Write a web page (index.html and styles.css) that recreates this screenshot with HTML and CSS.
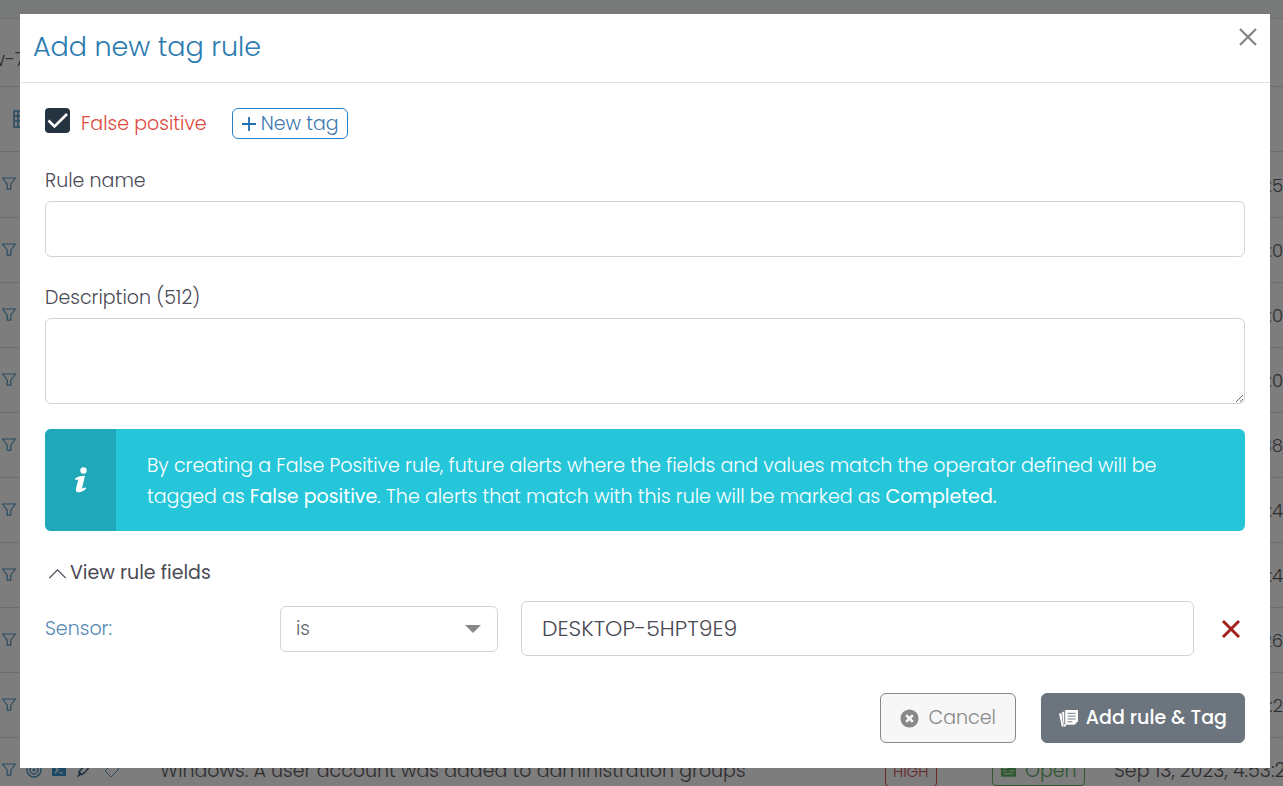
FILE: index.html
```html
<!DOCTYPE html>
<html lang="en">
<head>
<meta charset="utf-8">
<title>Add new tag rule</title>
<meta name="viewport" content="width=device-width, initial-scale=1">
<link rel="stylesheet" href="styles.css">
</head>
<body>
<svg class="sprite" aria-hidden="true">
  <symbol id="funnel" viewBox="0 0 16 16"><path d="M1.500 2h13L9.800 8v5.200H6.200V8z" fill="none" stroke="currentColor" stroke-width="1.200" stroke-linejoin="round"/></symbol>
</svg>

<div class="page" aria-hidden="true">
  <div class="topband"></div>
  <div class="pagebar"><span class="clip">w-7</span></div>
  <div class="toolbar">
    <svg class="list" viewBox="0 0 18 18"><path d="M1 1h16v16H1zM1 6h16M1 11h16M5 1v16" fill="none" stroke="currentColor" stroke-width="1.600"/></svg>
  </div>
  <table class="alerts">
    <colgroup><col class="c-tools"><col><col class="c-severity"><col class="c-status"><col class="c-time"></colgroup>
    <tbody>
      <tr><td><svg class="ico"><use href="#funnel"/></svg></td><td></td><td></td><td></td><td class="tail">:5</td></tr>
      <tr><td><svg class="ico"><use href="#funnel"/></svg></td><td></td><td></td><td></td><td class="tail">:0</td></tr>
      <tr><td><svg class="ico"><use href="#funnel"/></svg></td><td></td><td></td><td></td><td class="tail">:0</td></tr>
      <tr><td><svg class="ico"><use href="#funnel"/></svg></td><td></td><td></td><td></td><td class="tail">:0</td></tr>
      <tr><td><svg class="ico"><use href="#funnel"/></svg></td><td></td><td></td><td></td><td class="tail">38</td></tr>
      <tr><td><svg class="ico"><use href="#funnel"/></svg></td><td></td><td></td><td></td><td class="tail">0:4</td></tr>
      <tr><td><svg class="ico"><use href="#funnel"/></svg></td><td></td><td></td><td></td><td class="tail">:4</td></tr>
      <tr><td><svg class="ico"><use href="#funnel"/></svg></td><td></td><td></td><td></td><td class="tail">26</td></tr>
      <tr><td><svg class="ico"><use href="#funnel"/></svg></td><td></td><td></td><td></td><td class="tail">:2</td></tr>
      <tr>
        <td><div class="tools">
          <svg class="ico"><use href="#funnel"/></svg>
          <svg class="ico" viewBox="0 0 16 16"><g fill="none" stroke="currentColor" stroke-width="1.500"><circle cx="8" cy="8" r="7"/><circle cx="8" cy="8" r="4"/></g><circle cx="8" cy="8" r="1.600" fill="currentColor"/></svg>
          <svg class="ico ico-console" viewBox="0 0 16 16"><rect x="1" y="1" width="14" height="13" fill="currentColor"/><path d="M4 5l3 3-3 3M8 11h4" fill="none" stroke="#fff" stroke-width="1.200"/></svg>
          <svg class="ico ico-dark" viewBox="0 0 16 16"><path d="M15 1C10 3 5 7 3 10l3 2.500C10 10 13 6 15 1z" fill="none" stroke="currentColor" stroke-width="1.500"/><path d="M3 10l-2 5.500 5-3z" fill="currentColor"/></svg>
          <svg class="ico ico-tag" viewBox="0 0 16 16"><path d="M1 9l7-7h6v6l-7 7z" fill="none" stroke="currentColor" stroke-linejoin="round"/><circle cx="11.500" cy="4.500" r="1" fill="currentColor"/></svg>
        </div></td>
        <td>Windows: A user account was added to administration groups</td>
        <td><span class="badge badge-high">HIGH</span></td>
        <td><span class="badge badge-open"><svg class="ticket" viewBox="0 0 18 14"><path d="M1 1h16v12H1z" fill="currentColor"/><path d="M3 4h5M3 7h4M10 7h5M4 10h10" stroke="#fff"/></svg>Open</span></td>
        <td>Sep 13, 2023, 4:53:2</td>
      </tr>
    </tbody>
  </table>
</div>

<div class="backdrop">
  <form class="dialog" role="dialog" aria-modal="true" aria-labelledby="dialog-title">
    <header class="dialog-head">
      <h1 id="dialog-title">Add new tag rule</h1>
      <button class="icon-btn close" type="button" aria-label="Close"><svg viewBox="0 0 20 20"><path d="M2 2l16 16M18 2L2 18" fill="none" stroke="currentColor" stroke-width="2.200"/></svg></button>
    </header>
    <div class="dialog-body">
      <div class="tags">
        <span class="check">
          <input type="checkbox" id="false-positive" checked>
          <svg viewBox="0 0 25 25" aria-hidden="true"><path d="M3.500 12.500l6 6L22 6" fill="none" stroke="#fff" stroke-width="2.600"/></svg>
        </span>
        <label class="danger" for="false-positive">False positive</label>
        <button class="new-tag" type="button"><svg viewBox="0 0 16 16" aria-hidden="true"><path d="M8 1v14M1 8h14" stroke="currentColor" stroke-width="1.800"/></svg>New tag</button>
      </div>

      <div class="field">
        <label for="rule-name">Rule name</label>
        <input class="box name" type="text" id="rule-name">
      </div>
      <div class="field">
        <label for="description">Description (512)</label>
        <textarea class="box description" id="description"></textarea>
      </div>

      <div class="notice">
        <div class="notice-icon"><svg viewBox="0 0 14 26" aria-hidden="true"><circle cx="9.500" cy="3.500" r="3.200" fill="#fff"/><path d="M1 11.500C4 9.500 7 8.800 11 8.800L8.200 20.500c-.3 1.300.8 1.300 3.300-.2l.7 1.300C9.500 24.300 7 25.500 4.300 25.300c-2.300-.2-2.800-1.800-2.300-3.800l2.100-8.300c.2-1-.8-.9-2.600-.2z" fill="#fff"/></svg></div>
        <p>By creating a False Positive rule, future alerts where the fields and values match the operator defined will be tagged as <strong>False positive</strong>. The alerts that match with this rule will be marked as <strong>Completed.</strong></p>
      </div>

      <button class="toggle" type="button" aria-expanded="true" aria-controls="rule-fields"><svg viewBox="0 0 20 12" aria-hidden="true"><path d="M1 11l9-9 9 9" fill="none" stroke="currentColor" stroke-width="1.400"/></svg>View rule fields</button>

      <div class="rule" id="rule-fields">
        <label class="rule-label" for="operator">Sensor:</label>
        <span class="select"><select class="box" id="operator"><option>is</option></select></span>
        <input class="box value" type="text" value="DESKTOP-5HPT9E9" aria-label="Sensor value">
        <button class="icon-btn remove" type="button" aria-label="Remove field"><svg viewBox="0 0 20 20"><path d="M2 2l16 16M18 2L2 18" fill="none" stroke="currentColor" stroke-width="3"/></svg></button>
      </div>

      <footer class="actions">
        <button class="btn btn-cancel" type="button"><svg viewBox="0 0 20 20" aria-hidden="true"><circle cx="10" cy="10" r="9.500" fill="currentColor"/><path d="M6.500 6.500l7 7M13.500 6.500l-7 7" stroke="#f7f7f7" stroke-width="2.800"/></svg>Cancel</button>
        <button class="btn btn-submit" type="submit"><svg viewBox="0 0 20 18" aria-hidden="true"><path d="M0 4l2.500-.8 2 14.300-1.500.3zM3.200 2.500l2.300-.8v13L8 17l-3 .8z" fill="currentColor"/><path d="M6.500 0H20v12l-3.500 3.500h-10z" fill="currentColor"/><path d="M9 3.500h8.500M9 6.500h8.500M9 9.500h8.500M9 12.500h5" stroke="#6c757d"/></svg>Add rule &amp; Tag</button>
      </footer>
    </div>
  </form>
</div>
</body>
</html>
```
FILE: styles.css
```css
* { box-sizing: border-box; }

body {
  margin: 0;
  background: #fcfafc;
  color: #4a4a55;
  font: 300 19px/30px Poppins, Inter, "Open Sans", sans-serif;
}

button, input, select, textarea { font: inherit; color: inherit; }
button { cursor: pointer; }
svg { display: block; flex: none; }
.sprite { position: absolute; width: 0; height: 0; }

/* Alerts page */
.page { height: 100vh; overflow: hidden; color: #5c5c5c; }
.topband { height: 19px; background: #f0f4f2; border-bottom: 1px solid #dcdcdc; }
.pagebar { display: flex; align-items: center; height: 68px; padding-top: 14px; border-bottom: 1px solid #dcdcdc; }
.clip { display: flex; justify-content: flex-end; width: 25px; white-space: nowrap; overflow: hidden; }
.toolbar { height: 65px; padding: 23px 13px; border-bottom: 1px solid #dcdcdc; color: #4f96c0; }
.list { width: 18px; height: 18px; }

.alerts { width: 100%; table-layout: fixed; border-collapse: collapse; }
.alerts td { height: 65px; padding: 3px 0 0; border-bottom: 1px solid #dcdcdc; white-space: nowrap; overflow: hidden; }
.alerts td:first-child { padding: 0; }
.c-tools { width: 160px; }
.c-severity { width: 107px; }
.c-status { width: 122px; }
.c-time { width: 169px; }
.alerts .tail { text-align: right; font-size: 18px; }
.ico { width: 16px; height: 16px; margin-left: 1px; color: #4f96c0; }
.ico-console { color: #3c92cc; }
.ico-dark { color: #3f6484; }
.ico-tag { margin-left: 4px; }
.tools { display: flex; gap: 8px; }
.badge { display: inline-flex; align-items: center; gap: 8px; height: 30px; padding: 0 7px; border: 1px solid; border-radius: 4px; }
.badge-high { color: #d0504e; font-size: 15px; }
.badge-open { color: #5cb060; }
.ticket { width: 17px; height: 14px; }

/* Dialog */
.backdrop {
  position: fixed;
  inset: 0;
  padding: 14px 13px 18px 20px;
  background: rgb(0 0 0 / 50%);
  overflow: auto;
}
.dialog { background: #fff; }
.dialog-head {
  display: flex;
  justify-content: space-between;
  align-items: flex-start;
  padding: 13px 12px 15px 13px;
  border-bottom: 1px solid #dee2e6;
}
.dialog-head h1 { margin: 0; font-size: 27px; line-height: 40px; font-weight: 300; color: #2b7bb0; }
.icon-btn { padding: 0; border: 0; background: none; }
.icon-btn svg { width: 20px; height: 20px; }
.close { color: #808487; }

.dialog-body { padding: 25px; }
.tags { display: flex; align-items: center; height: 31px; margin-bottom: 27px; }
.check { position: relative; align-self: flex-start; width: 25px; height: 25px; margin-right: 11px; }
.check input { appearance: none; display: block; width: 25px; height: 25px; margin: 0; border-radius: 4px; background: #263340; }
.check svg { position: absolute; inset: 0; pointer-events: none; }
.danger { color: #e0483e; }
.new-tag {
  display: flex;
  align-items: center;
  gap: 4px;
  height: 31px;
  margin-left: 25px;
  padding: 0 8px;
  border: 1px solid #2a7fc9;
  border-radius: 6px;
  background: #fff;
  color: #4179ad;
}
.new-tag svg { width: 16px; height: 16px; color: #1f6fb2; }

.field { display: flex; flex-direction: column; gap: 5px; }
.field + .field { margin-top: 26px; }
.box { width: 100%; border: 1px solid #d2d3d5; border-radius: 6px; background: #fff; }
.name { height: 56px; padding: 0 20px; }
.description { display: block; height: 86px; padding: 12px 20px; resize: vertical; }

.notice { display: flex; margin: 25px 0 27px; border-radius: 6px; overflow: hidden; background: #26c6da; color: #fff; }
.notice-icon { display: flex; flex: none; align-items: center; justify-content: center; width: 71px; background: #20a8b9; }
.notice-icon svg { width: 14px; height: 26px; }
.notice p { margin: 0; padding: 21px 31px 19px; line-height: 31px; }
.notice strong { font-weight: 400; }

.toggle { display: flex; align-items: center; gap: 3px; margin-bottom: 13px; padding: 0 3px; border: 0; background: none; font-weight: 400; }
.toggle svg { width: 19px; height: 11px; }

.rule { display: grid; grid-template-columns: 212px 218px 1fr 28px; align-items: center; gap: 23px; margin-bottom: 37px; }
.rule-label { color: #5588b5; }
.select { position: relative; }
.select select { display: block; appearance: none; height: 46px; padding: 0 15px; color: #666; }
.select::after {
  content: "";
  position: absolute;
  top: 19px;
  right: 17px;
  border: 8px solid transparent;
  border-top-color: #888;
  border-bottom: 0;
  pointer-events: none;
}
.value { height: 55px; padding: 0 20px; font-size: 22px; }
.remove { display: flex; justify-content: center; color: #a3201c; }

.actions { display: flex; justify-content: flex-end; gap: 25px; }
.btn { display: flex; align-items: center; justify-content: center; height: 50px; border: 1px solid; border-radius: 6px; }
.btn-cancel { gap: 10px; padding: 0 19px; border-color: #888; background: #f7f7f7; color: #888; }
.btn-cancel svg { width: 19px; height: 19px; }
.btn-submit { gap: 8px; padding: 0 17px; border-color: #6c757d; background: #6c757d; color: #fff; font-weight: 500; }
.btn-submit svg { width: 19px; height: 17px; }
```
